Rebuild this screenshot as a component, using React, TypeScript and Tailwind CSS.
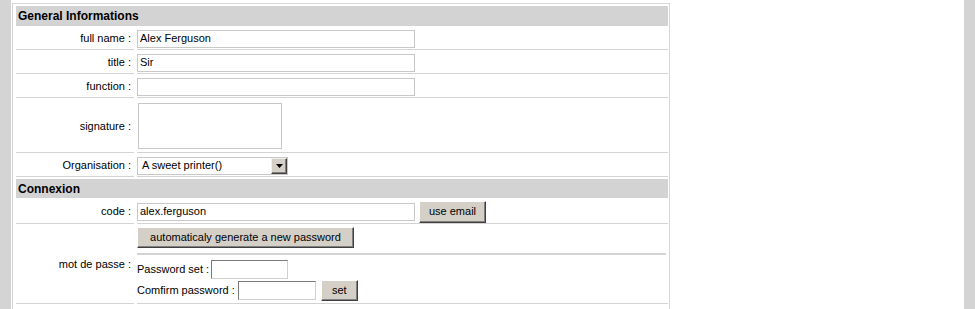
import React from "react"

const line = "border-b border-[#d3d3d3]"
const btn =
  "bg-[#d4d0c8] border border-t-white border-l-white border-r-[#404040] border-b-[#404040] shadow-[inset_-1px_-1px_0_#808080] text-[11px] text-black leading-none flex items-center justify-center"
const textInput = "h-[18px] border border-[#c8c8c8] bg-white px-[2px] flex items-center"
const pwInput =
  "h-[19px] bg-white border border-t-[#7a7a7a] border-l-[#7a7a7a] border-r-[#d0d0d0] border-b-[#d0d0d0]"

function Header({ title }: { title: string }) {
  return (
    <div className="h-[19px] bg-[#d3d3d3] pl-[2px] flex items-center text-[12px] font-bold text-black">
      {title}
    </div>
  )
}

function Row({ label, h, children }: { label: string; h: string; children: React.ReactNode }) {
  return (
    <div className={`mt-[2px] flex gap-[3px] ${h}`}>
      <div className={`w-[118px] shrink-0 ${line} flex items-center justify-end pr-[3px]`}>{label}</div>
      <div className={`flex-1 ${line} flex items-center`}>{children}</div>
    </div>
  )
}

export default function App() {
  return (
    <div className="w-[975px] h-[309px] bg-white flex overflow-hidden font-['Liberation_Sans',Arial,sans-serif] text-[11px] text-black">
      <div className="w-[11px] shrink-0 bg-[#d4d4d4]" />
      <div className="ml-[1px] mt-[3px] w-[658px] shrink-0 border-l border-r border-t border-[#d6d6d6] pl-[3px] pr-[1px] pt-[2px]">
        <div className="h-[20px] bg-[#d3d3d3] pl-[2px] flex items-center text-[12px] font-bold">General Informations</div>
        <Row label="full name :" h="h-[22px]">
          <div className={`${textInput} w-[278px]`}>Alex Ferguson</div>
        </Row>
        <Row label="title :" h="h-[22px]">
          <div className={`${textInput} w-[278px]`}>Sir</div>
        </Row>
        <Row label="function :" h="h-[22px]">
          <div className={`${textInput} w-[278px]`} />
        </Row>
        <Row label="signature :" h="h-[53px]">
          <div className="ml-[1px] w-[144px] h-[46px] border border-[#c8c8c8] bg-white" />
        </Row>
        <Row label="Organisation :" h="h-[22px]">
          <div className="w-[151px] h-[18px] border border-[#c8c8c8] bg-white flex items-center">
            <span className="flex-1 pl-[4px]">A sweet printer()</span>
            <span className="w-[16px] h-[16px] bg-[#d4d0c8] border border-t-[#f0f0f0] border-l-[#f0f0f0] border-r-[#404040] border-b-[#404040] shadow-[inset_-1px_-1px_0_#808080] flex items-center justify-center">
              <svg width="7" height="4" viewBox="0 0 7 4">
                <path d="M0 0H7L3.5 4Z" fill="#000" />
              </svg>
            </span>
          </div>
        </Row>
        <div className="mt-[2px]">
          <Header title="Connexion" />
        </div>
        <Row label="code :" h="h-[24px]">
          <div className="flex items-center gap-[4px]">
            <div className={`${textInput} w-[278px]`}>alex.ferguson</div>
            <button className={`${btn} w-[67px] h-[22px]`}>use email</button>
          </div>
        </Row>
        <div className="mt-[2px] flex gap-[3px] h-[78px]">
          <div className={`w-[118px] shrink-0 ${line} flex items-center justify-end pr-[3px]`}>mot de passe :</div>
          <div className={`flex-1 ${line} flex flex-col pt-[1px] pr-[2px]`}>
            <button className={`${btn} w-[217px] h-[21px]`}>automaticaly generate a new password</button>
            <div className="mt-[5px] h-[2px] bg-[#d3d3d3]" />
            <div className="mt-[5px] flex items-center">
              <span>Password set :</span>
              <div className={`${pwInput} ml-[2px] w-[77px]`} />
            </div>
            <div className="mt-[1px] flex items-center">
              <span>Comfirm password :</span>
              <div className={`${pwInput} ml-[3px] w-[78px]`} />
              <button className={`${btn} ml-[5px] w-[37px] h-[21px]`}>set</button>
            </div>
          </div>
        </div>
      </div>
      <div className="flex-1" />
      <div className="w-[11px] shrink-0 bg-[#d4d4d4]" />
    </div>
  )
}
